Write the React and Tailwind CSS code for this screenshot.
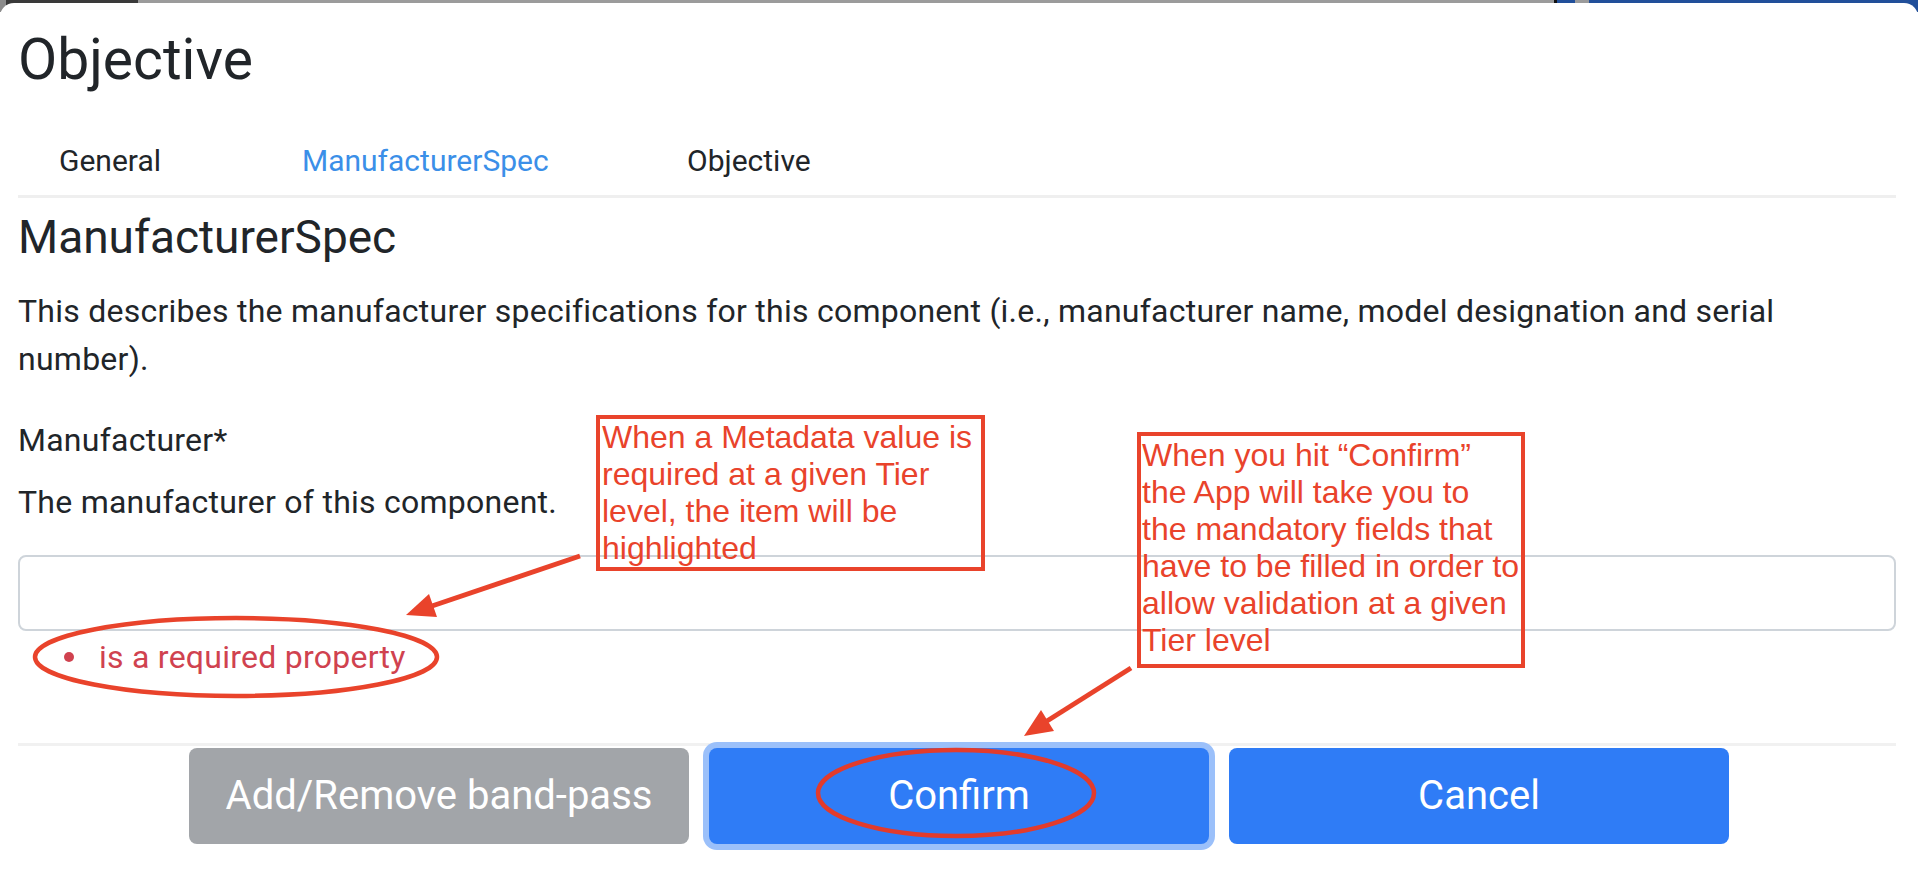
import React from "react";

const red = "#e9432b";

function TopStrip() {
    // sliver of the window behind the modal
    return (
        <div className="flex h-[12px]">
            <div className="w-[6px] bg-[#8c8c8c]" />
            <div className="w-[132px] bg-[#3a3a3a]" />
            <div className="w-[1416px] bg-[#9b9b9b]" />
            <div className="w-[3px] bg-[#111]" />
            <div className="w-[18px] bg-[#214f9a]" />
            <div className="w-[14px] bg-[#9b9b9b]" />
            <div className="flex-1 bg-[#214f9a]" />
        </div>
    );
}

function Tabs() {
    return (
        <div className="flex pt-[12px] pb-[12px] border-b-[3px] border-[#efefef] text-[30px] leading-[44px]">
            <span className="ml-[41px] w-[243px] text-[#212529]">General</span>
            <span className="w-[385px] text-[#3b8fe8]">ManufacturerSpec</span>
            <span className="text-[#212529]">Objective</span>
        </div>
    );
}

function Annotations() {
    return (
        <>
            <div
                className="absolute left-[596px] top-[415px] w-[389px] h-[156px] border-[4px] pl-[2px] text-[32px] leading-[37px] whitespace-nowrap"
                style={{ borderColor: red, color: red, fontFamily: '"Liberation Sans", Arial, sans-serif' }}
            >
                <div>When a Metadata value is</div>
                <div>required at a given Tier</div>
                <div>level, the item will be</div>
                <div>highlighted</div>
            </div>
            <div
                className="absolute left-[1137px] top-[432px] w-[388px] h-[236px] border-[4px] pl-[1px] pt-[1px] text-[32px] leading-[37px] whitespace-nowrap"
                style={{ borderColor: red, color: red, fontFamily: '"Liberation Sans", Arial, sans-serif' }}
            >
                <div>When you hit “Confirm”</div>
                <div>the App will take you to</div>
                <div>the mandatory fields that</div>
                <div>have to be filled in order to</div>
                <div>allow validation at a given</div>
                <div>Tier level</div>
            </div>
            <svg
                className="absolute left-0 top-0 pointer-events-none"
                width="1918"
                height="876"
                viewBox="0 0 1918 876"
            >
                <ellipse cx="236" cy="657" rx="201" ry="39" fill="none" stroke={red} strokeWidth="4.5" />
                <ellipse cx="956" cy="793" rx="138" ry="43" fill="none" stroke="#e23b2c" strokeWidth="4.5" />
                <line x1="580" y1="556" x2="432" y2="606" stroke={red} strokeWidth="5" />
                <polygon points="406,615 437,617 429,594" fill={red} />
                <line x1="1131" y1="668" x2="1047" y2="721" stroke={red} strokeWidth="5" />
                <polygon points="1024,736 1054,731 1041,710" fill={red} />
            </svg>
        </>
    );
}

export default function App() {
    return (
        <div
            className="relative w-[1918px] h-[876px] overflow-hidden bg-white"
            style={{ fontFamily: "Roboto, 'Liberation Sans', sans-serif" }}
        >
            <TopStrip />
            <div className="-mt-[9px] relative bg-white rounded-t-[14px] h-[873px]">
                <div className="pl-[18px] pr-[22px] pt-[23px] text-[#212529]">
                    <h1 className="text-[57px] leading-[67px] font-normal">Objective</h1>

                    <div className="mt-[34px]">
                        <Tabs />
                    </div>

                    <h2 className="mt-[10px] text-[46px] leading-[58px] font-normal">ManufacturerSpec</h2>

                    <p className="mt-[21px] text-[32px] leading-[48px] tracking-[0.25px] max-w-[1840px]">
                        This describes the manufacturer specifications for this component (i.e., manufacturer name,
                        model designation and serial number).
                    </p>

                    <div className="mt-[33px] text-[32px] leading-[48px] tracking-[0.25px]">Manufacturer*</div>
                    <div className="mt-[14px] text-[32px] leading-[48px] tracking-[0.25px]">
                        The manufacturer of this component.
                    </div>

                    <input
                        type="text"
                        className="mt-[29px] block w-full h-[76px] border-[2px] border-[#ced4da] rounded-[8px] px-[24px] text-[32px] outline-none"
                    />

                    <div className="mt-[2px] flex items-center text-[32px] leading-[48px] tracking-[0.25px] text-[#d0424f]">
                        <span className="ml-[46px] w-[10px] h-[10px] rounded-full bg-[#d0424f]" />
                        <span className="ml-[25px]">is a required property</span>
                    </div>

                    <div className="mt-[62px] h-[3px] bg-[#f1f1f1]" />
                </div>

                <div className="mt-[2px] flex justify-center gap-[20px] text-[40px] text-white">
                    <button className="w-[500px] h-[96px] rounded-[8px] bg-[#a2a5a9]">Add/Remove band-pass</button>
                    <button className="w-[500px] h-[96px] rounded-[8px] bg-[#2f7cf6] ring-[6px] ring-[#9bc0fa]">
                        Confirm
                    </button>
                    <button className="w-[500px] h-[96px] rounded-[8px] bg-[#2f7cf6]">Cancel</button>
                </div>
            </div>
            <Annotations />
        </div>
    );
}
